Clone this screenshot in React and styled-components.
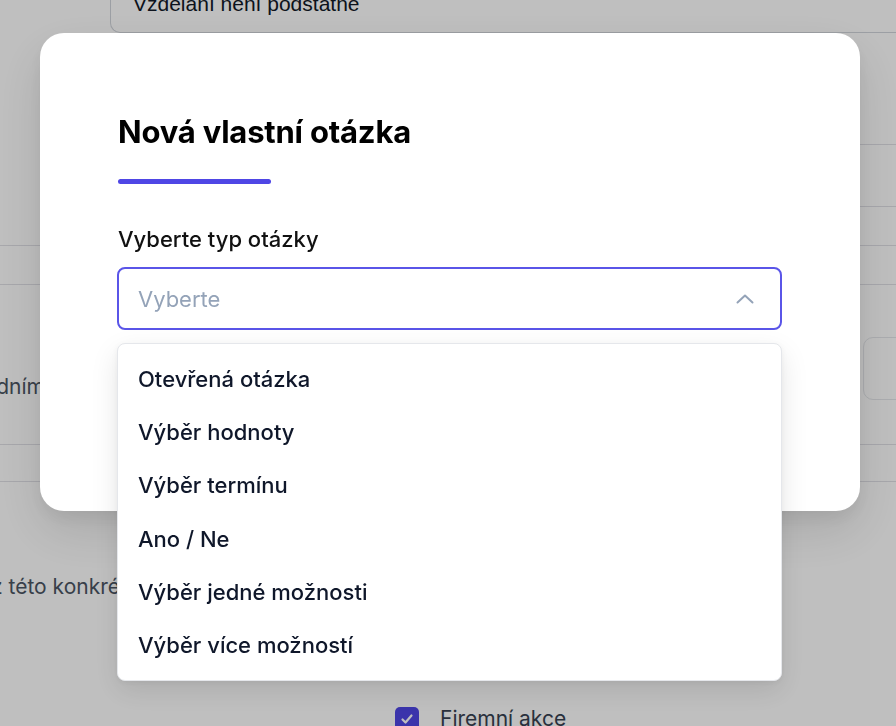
import React from 'react';
import styled, { createGlobalStyle } from 'styled-components';

const GlobalStyle = createGlobalStyle`
  html, body {
    margin: 0;
    padding: 0;
    background: #ffffff;
    font-family: Inter, "Noto Sans", sans-serif;
    overflow: hidden;
  }
  * {
    box-sizing: border-box;
  }
`;

/* ---------- page behind the modal ---------- */

const Page = styled.div`
  width: 896px;
  height: 726px;
  overflow: hidden;
  display: flex;
  flex-direction: column;
  color: #4b5563;
  font-size: 21px;

  > * {
    flex-shrink: 0;
  }
`;

const TopField = styled.div`
  margin: -30px 0 0 110px;
  height: 63px;
  padding: 6px 22px 0;
  display: flex;
  align-items: center;
  border: 1px solid #d1d5db;
  border-top: none;
  border-right: none;
  border-bottom-left-radius: 10px;
  color: #111827;
  font-family: "Liberation Sans", Arial, sans-serif;
`;

const IndentRow = styled.div`
  margin-left: 110px;
  height: ${(p) => p.$h}px;
  border-bottom: 1px solid #e0e0e6;
`;

const Band = styled.div`
  height: ${(p) => p.$h}px;
  border-bottom: 1px solid #e0e0e6;
`;

const FieldRow = styled.div`
  height: 160px;
  display: flex;
  align-items: flex-start;
  justify-content: space-between;
  border-bottom: 1px solid #e0e0e6;
`;

const RowLabel = styled.div`
  width: 45px;
  margin-top: 89px;
  display: flex;
  justify-content: flex-end;
  white-space: nowrap;
`;

const CutText = styled.span`
  margin-left: ${(p) => p.$ml}px;
  white-space: nowrap;
`;

const GhostButton = styled.div`
  width: 60px;
  height: 63px;
  margin-right: -27px;
  margin-top: 52px;
  border: 1px solid #e5e7eb;
  border-radius: 10px;
  background: #ffffff;
`;

const TextRow = styled.div`
  height: 224px;
  display: flex;
  align-items: center;
  padding-bottom: 16px;
`;

const CheckRow = styled.div`
  display: flex;
  align-items: center;
  gap: 21px;
  margin-left: 395px;
  color: #374151;
`;

const CheckBox = styled.div`
  width: 24px;
  height: 24px;
  border-radius: 5px;
  background: #4f46e5;
  display: flex;
  align-items: center;
  justify-content: center;
`;

const Overlay = styled.div`
  position: fixed;
  inset: 0;
  background: rgba(0, 0, 0, 0.25);
`;

/* ---------- modal ---------- */

const Modal = styled.div`
  position: fixed;
  left: 40px;
  top: 33px;
  width: 820px;
  height: 478px;
  background: #ffffff;
  border-radius: 24px;
  padding: 80px 78px 0 77px;
  box-shadow: 0 20px 50px rgba(0, 0, 0, 0.12), 0 8px 16px rgba(0, 0, 0, 0.06);
`;

const Title = styled.h1`
  margin: 0 0 0 1px;
  font-size: 31px;
  font-weight: 700;
  color: #000000;
  letter-spacing: -0.2px;
`;

const AccentBar = styled.div`
  width: 153px;
  height: 5px;
  margin: 29px 0 0 1px;
  border-radius: 3px;
  background: #4f46e5;
`;

const Label = styled.div`
  margin: 42px 0 15px 1px;
  font-size: 22px;
  font-weight: 500;
  color: #111111;
`;

const SelectWrap = styled.div`
  position: relative;
`;

const SelectBox = styled.div`
  height: 63px;
  border: 2px solid #5a55e8;
  border-radius: 8px;
  padding: 0 26px 0 19px;
  display: flex;
  align-items: center;
  justify-content: space-between;
  font-size: 22px;
  color: #94a3b8;
`;

const Menu = styled.ul`
  position: absolute;
  top: calc(100% + 13px);
  left: 0;
  right: 0;
  margin: 0;
  padding: 8px 0;
  list-style: none;
  background: #ffffff;
  border: 1px solid #e5e7eb;
  border-radius: 8px;
  box-shadow: 0 10px 28px rgba(0, 0, 0, 0.1), 0 2px 6px rgba(0, 0, 0, 0.05);
`;

const MenuItem = styled.li`
  height: 53.33px;
  display: flex;
  align-items: center;
  padding: 0 20px;
  font-size: 22px;
  font-weight: 500;
  color: #0f172a;
`;

const options = [
  'Otevřená otázka',
  'Výběr hodnoty',
  'Výběr termínu',
  'Ano / Ne',
  'Výběr jedné možnosti',
  'Výběr více možností',
];

function ChevronUp() {
  return (
    <svg width="18" height="10" viewBox="0 0 18 10" fill="none">
      <path d="M1.5 8.5 9 1.5l7.5 7" stroke="#94a3b8" strokeWidth="2" strokeLinecap="round" strokeLinejoin="round" />
    </svg>
  );
}

function Check() {
  return (
    <svg width="14" height="14" viewBox="0 0 14 14" fill="none">
      <path d="M2.5 7.5 5.5 10.5 11.5 3.5" stroke="#ffffff" strokeWidth="2.2" strokeLinecap="round" strokeLinejoin="round" />
    </svg>
  );
}

export default function App() {
  return (
    <>
      <GlobalStyle />
      <Page>
        <TopField>Vzdělání není podstatné</TopField>
        <IndentRow $h={112} />
        <IndentRow $h={62} />
        <Band $h={39} />
        <Band $h={39} />
        <FieldRow>
          <RowLabel>Pravidelném každodním</RowLabel>
          <GhostButton />
        </FieldRow>
        <Band $h={37} />
        <TextRow>
          <CutText $ml={-9}>z této konkrétní akce</CutText>
        </TextRow>
        <CheckRow>
          <CheckBox>
            <Check />
          </CheckBox>
          Firemní akce
        </CheckRow>
      </Page>
      <Overlay />
      <Modal>
        <Title>Nová vlastní otázka</Title>
        <AccentBar />
        <Label>Vyberte typ otázky</Label>
        <SelectWrap>
          <SelectBox>
            Vyberte
            <ChevronUp />
          </SelectBox>
          <Menu>
            {options.map((o) => (
              <MenuItem key={o}>{o}</MenuItem>
            ))}
          </Menu>
        </SelectWrap>
      </Modal>
    </>
  );
}
